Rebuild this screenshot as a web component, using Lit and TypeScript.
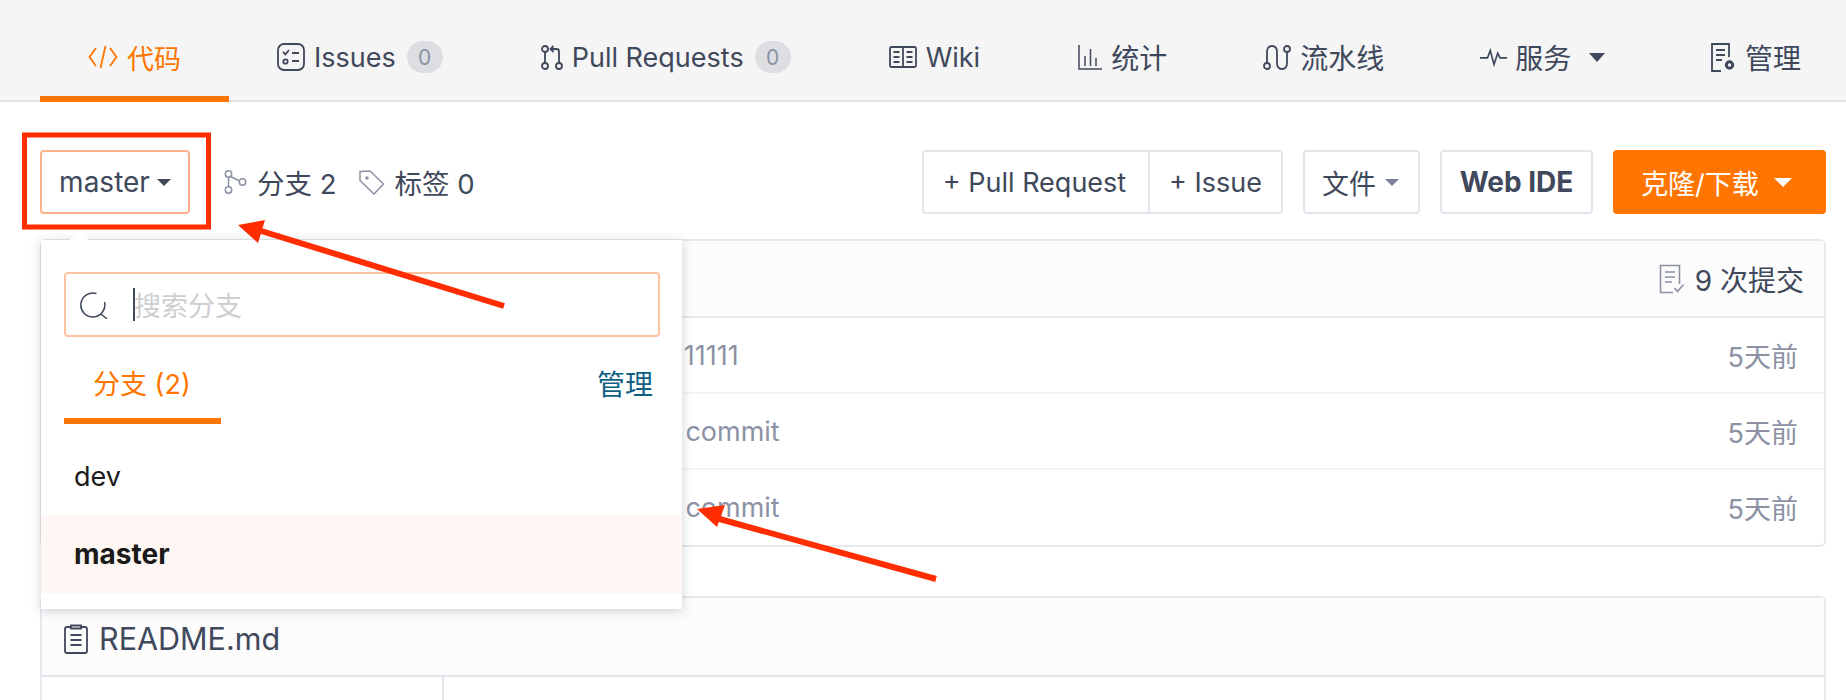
import { LitElement, html, css } from "lit";
import { customElement } from "lit/decorators.js";

const icons = {
  code: html`<svg width="30" height="24" viewBox="0 0 30 24" fill="none" stroke="currentColor" stroke-width="1.8"><path d="M8 3 1.500 12 8 21M22 3l6.500 9L22 21M17.500 1 12.500 23"/></svg>`,
  issues: html`<svg width="28" height="28" viewBox="0 0 28 28" fill="none" stroke="currentColor" stroke-width="1.8"><rect x="1" y="1" width="26" height="26" rx="6"/><path d="m6 9 2.500 2.500L12 7M15 10h7M15 18h7"/><circle cx="8.500" cy="18.500" r="2.200"/></svg>`,
  pr: html`<svg width="22" height="25" viewBox="0 0 22 25" fill="none" stroke="currentColor" stroke-width="1.800"><circle cx="4" cy="4" r="3"/><circle cx="4" cy="21" r="3"/><circle cx="18" cy="21" r="3"/><path d="M4 7v11M18 18V6.500Q18 4 15.500 4H10M12.500 1 9.500 4l3 3"/></svg>`,
  wiki: html`<svg width="28" height="24" viewBox="0 0 28 24" fill="none" stroke="currentColor" stroke-width="1.800"><rect x="1" y="2" width="26" height="20" rx="1.500"/><path d="M14 2v20M4.500 7h6M4.500 12h6M4.500 17h6M17.500 7h6M17.500 12h6M17.500 17h6"/></svg>`,
  stats: html`<svg width="24" height="25" viewBox="0 0 24 25" fill="none" stroke="currentColor" stroke-width="1.500"><path d="M1 0v24h23M7 11v10M12.500 4v17M18 13v8"/></svg>`,
  pipeline: html`<svg width="28" height="25" viewBox="0 0 28 25" fill="none" stroke="currentColor" stroke-width="1.800"><circle cx="4" cy="21" r="3"/><circle cx="24" cy="4" r="3"/><path d="M4 18V7q0-6 5-6t5 6v11q0 6 5 6t5-6V7"/></svg>`,
  service: html`<svg class="tight" width="28" height="20" viewBox="0 0 30 20" fill="none" stroke="currentColor" stroke-width="1.800"><path d="M0 11h8l3-8 4 15 4-12 2.500 5H29"/></svg>`,
  manage: html`<svg width="25" height="29" viewBox="0 0 25 29" fill="none" stroke="currentColor" stroke-width="1.800"><path d="M10 28H1V1h17v13M5 7h9M5 12h9M5 17h6"/><circle cx="18.500" cy="22" r="3.200" stroke-width="3"/></svg>`,
  branch: html`<svg width="23" height="24" viewBox="0 0 23 24" fill="none" stroke="#8c92a4" stroke-width="1.500"><circle cx="4.500" cy="4" r="3.200"/><circle cx="4.500" cy="20" r="3.200"/><circle cx="18.500" cy="12" r="3.200"/><path d="M4.500 7.200v9.600M6.500 6.500 15.500 11"/></svg>`,
  tag: html`<svg width="26" height="25" viewBox="0 0 26 25" fill="none" stroke="#8c92a4" stroke-width="1.500"><path d="M1 1.500v9L15 24l9.500-10L11 1Z"/><circle cx="8" cy="8" r="1" fill="#8c92a4"/></svg>`,
  search: html`<svg width="28" height="28" viewBox="0 0 28 28" fill="none" stroke="#40485b" stroke-width="1.500"><path d="M16.500 2.500A12 12 0 1 0 24.500 11M21 23l6 5"/></svg>`,
  commits: html`<svg width="26" height="30" viewBox="0 0 26 30" fill="none" stroke="#8c92a4" stroke-width="1.600"><path d="M14 28.500H1.500v-27h19V20M6 8h10M6 13h10M6 18h7M15.500 24l3 3.500 6-7"/></svg>`,
  readme: html`<svg width="24" height="30" viewBox="0 0 24 30" fill="none" stroke="#40485b" stroke-width="1.800"><path d="M7 3H3q-2 0-2 2v22q0 2 2 2h18q2 0 2-2V5q0-2-2-2h-4M7 1.500h10v3H7ZM6.500 11h11M6.500 16h11M6.500 21h11"/></svg>`,
};

const tabs = [
  { icon: icons.code, label: "代码", active: true },
  { icon: icons.issues, label: "Issues", badge: "0" },
  { icon: icons.pr, label: "Pull Requests", badge: "0" },
  { icon: icons.wiki, label: "Wiki" },
  { icon: icons.stats, label: "统计", large: true },
  { icon: icons.pipeline, label: "流水线", large: true },
  { icon: icons.service, label: "服务", caret: true, large: true },
  { icon: icons.manage, label: "管理", end: true, large: true },
];

const commits = [
  { text: "11111111111111", pad: 543 },
  { text: "Initial commit", pad: 569 },
  { text: "Initial commit", pad: 569 },
];

@customElement("app-root")
export class AppRoot extends LitElement {
  static styles = css`
    :host {
      display: block;
      position: relative;
      height: 700px;
      overflow: hidden;
      background: #fff;
      color: #40485b;
      font-family: Inter, "Noto Sans CJK SC", sans-serif;
      font-size: 27px;
    }
    .tabs {
      display: flex;
      height: 100px;
      padding-left: 40px;
      background: #f5f5f5;
      border-bottom: 2px solid #e3e3e3;
    }
    .tab {
      display: flex;
      align-items: center;
      gap: 9px;
      height: 102px;
      box-sizing: border-box;
      margin-right: 2px;
      padding: 12px 48px 0;
    }
    .tab.active {
      margin-right: 0;
      color: #ff7500;
      border-bottom: 6px solid #ff7500;
      padding-top: 18px;
    }
    .tab.large {
      margin-right: 0;
      font-size: 28px;
    }
    .tab.end {
      margin-left: auto;
      padding-right: 45px;
    }
    .tight {
      margin-right: -2px;
    }
    .badge {
      width: 36px;
      height: 32px;
      margin-left: 2px;
      border-radius: 16px;
      background: #dcdee1;
      color: #8c92a4;
      font-size: 21px;
      display: flex;
      align-items: center;
      justify-content: center;
    }
    .caret {
      width: 0;
      height: 0;
      margin-left: 9px;
      border-style: solid;
      border-color: transparent;
      border-width: 9px 8.500px 0;
      border-top-color: #40485b;
    }
    .caret.small {
      margin-left: 0;
      border-width: 7px 7px 0;
    }
    .caret.grey {
      border-top-color: #7c8396;
    }
    .caret.white {
      margin-left: 0;
      border-width: 9px 9px 0;
      border-top-color: #fff;
    }
    .toolbar {
      display: flex;
      align-items: center;
      height: 64px;
      padding: 48px 20px 25px 40px;
    }
    .btn {
      display: flex;
      align-items: center;
      justify-content: center;
      height: 64px;
      box-sizing: border-box;
      border: 2px solid #e2e6ec;
      border-radius: 4px;
      background: #fff;
    }
    .branch-btn {
      width: 150px;
      gap: 7px;
      border-color: #ffb38a;
      font-size: 28px;
    }
    .stat {
      display: flex;
      align-items: center;
      gap: 10px;
      font-size: 27.500px;
    }
    .stat.first {
      margin-left: 34px;
    }
    .stat.second {
      margin-left: 22px;
    }
    .actions {
      margin-left: auto;
      display: flex;
      gap: 20px;
    }
    .group {
      display: flex;
      width: 361px;
      height: 64px;
      box-sizing: border-box;
      border: 2px solid #e2e6ec;
      border-radius: 4px;
    }
    .group span {
      display: flex;
      align-items: center;
      justify-content: center;
    }
    .group span:first-child {
      width: 226px;
      box-sizing: border-box;
      padding-right: 3px;
      border-right: 2px solid #e2e6ec;
    }
    .group span:last-child {
      flex: 1;
    }
    .file-btn {
      width: 117px;
      gap: 9px;
      padding-right: 2px;
    }
    .ide-btn {
      width: 153px;
      font-weight: 700;
      font-size: 28px;
    }
    .clone-btn {
      width: 213px;
      gap: 15px;
      padding-right: 6px;
      border: 0;
      background: #ff7500;
      color: #fff;
    }
    .box {
      margin: 0 20px 0 40px;
      border: 2px solid #e6e9ee;
      border-radius: 6px;
    }
    .box-head {
      display: flex;
      align-items: center;
      justify-content: flex-end;
      gap: 10px;
      height: 75px;
      padding-right: 20px;
      background: #fcfcfc;
      border-bottom: 2px solid #e6e9ee;
      font-size: 28px;
    }
    .row {
      display: flex;
      align-items: center;
      justify-content: space-between;
      height: 74px;
      padding-right: 26px;
      border-bottom: 2px solid #f3f4f6;
      color: #8c92a4;
    }
    .row:last-child {
      border-bottom: 0;
      height: 75px;
    }
    .readme {
      margin-top: 49px;
    }
    .readme-head {
      display: flex;
      align-items: center;
      gap: 11px;
      height: 79px;
      padding-left: 22px;
      padding-top: 4px;
      box-sizing: border-box;
      background: #fcfcfc;
      border-bottom: 2px solid #e2e6ec;
      font-size: 30.500px;
    }
    .readme-body {
      height: 60px;
      width: 400px;
      border-right: 2px solid #e2e6ec;
    }
    .popup {
      position: absolute;
      left: 41px;
      top: 240px;
      width: 641px;
      height: 369px;
      box-sizing: border-box;
      padding: 32px 0 0;
      background: #fff;
      box-shadow: 0 2px 10px rgba(60, 70, 90, 0.25);
    }
    .popup::before {
      content: "";
      position: absolute;
      left: 30px;
      top: -6px;
      width: 16px;
      height: 16px;
      background: #fff;
      transform: rotate(45deg);
    }
    .search {
      display: flex;
      align-items: center;
      gap: 14px;
      height: 65px;
      box-sizing: border-box;
      margin: 0 22px 0 23px;
      padding-left: 14px;
      border: 2px solid #ffc2a0;
      border-radius: 4px;
      color: #cfcfcf;
    }
    .cursor {
      width: 2px;
      height: 33px;
      margin-left: 11px;
      margin-right: -15px;
      background: #40485b;
    }
    .popup-tabs {
      display: flex;
      justify-content: space-between;
      align-items: flex-start;
      height: 100px;
      margin: 0 29px 0 23px;
    }
    .popup-tab {
      width: 157px;
      height: 87px;
      box-sizing: border-box;
      padding: 26px 0 0 29px;
      color: #ff7500;
      border-bottom: 6px solid #ff7500;
    }
    .popup-manage {
      padding-top: 26px;
      color: #0f5f85;
      font-size: 28px;
    }
    .item {
      display: flex;
      align-items: center;
      height: 78px;
      padding-left: 33px;
      color: #1a1a1a;
    }
    .item.current {
      background: #fef6f3;
      font-weight: 700;
      font-size: 28px;
    }
    .annot {
      position: absolute;
      inset: 0;
      pointer-events: none;
    }
  `;

  render() {
    return html`
      <nav class="tabs">
        ${tabs.map(
          (t) => html`<div class="tab ${t.active ? "active" : ""} ${t.large ? "large" : ""} ${t.end ? "end" : ""}">
            ${t.icon}<span>${t.label}</span>
            ${t.badge ? html`<span class="badge">${t.badge}</span>` : ""}
            ${t.caret ? html`<span class="caret"></span>` : ""}
          </div>`
        )}
      </nav>

      <div class="toolbar">
        <div class="btn branch-btn">master <span class="caret small"></span></div>
        <div class="stat first">${icons.branch}<span>分支 2</span></div>
        <div class="stat second">${icons.tag}<span>标签 0</span></div>
        <div class="actions">
          <div class="group"><span>+ Pull Request</span><span>+ Issue</span></div>
          <div class="btn file-btn">文件 <span class="caret small grey"></span></div>
          <div class="btn ide-btn">Web IDE</div>
          <div class="btn clone-btn">克隆/下载 <span class="caret white"></span></div>
        </div>
      </div>

      <section class="box">
        <div class="box-head">${icons.commits}<span>9 次提交</span></div>
        ${commits.map(
          (c) => html`<div class="row">
            <span style="padding-left:${c.pad}px">${c.text}</span><span>5天前</span>
          </div>`
        )}
      </section>

      <section class="box readme">
        <div class="readme-head">${icons.readme}<span>README.md</span></div>
        <div class="readme-body"></div>
      </section>

      <div class="popup">
        <div class="search">${icons.search}<span class="cursor"></span><span>搜索分支</span></div>
        <div class="popup-tabs">
          <div class="popup-tab">分支 (2)</div>
          <div class="popup-manage">管理</div>
        </div>
        <div class="item">dev</div>
        <div class="item current">master</div>
      </div>

      <svg class="annot" width="1846" height="700" viewBox="0 0 1846 700">
        <rect x="24.500" y="135" width="184" height="92" fill="none" stroke="#ff2d00" stroke-width="5"/>
        <path d="M504 306 258 230" stroke="#ff2d00" stroke-width="6" fill="none"/>
        <path d="M238 225 265 220 258 243Z" fill="#ff2d00"/>
        <path d="M936 579 716 518" stroke="#ff2d00" stroke-width="6" fill="none"/>
        <path d="M697 509 725 505 717 527Z" fill="#ff2d00"/>
      </svg>
    `;
  }
}
